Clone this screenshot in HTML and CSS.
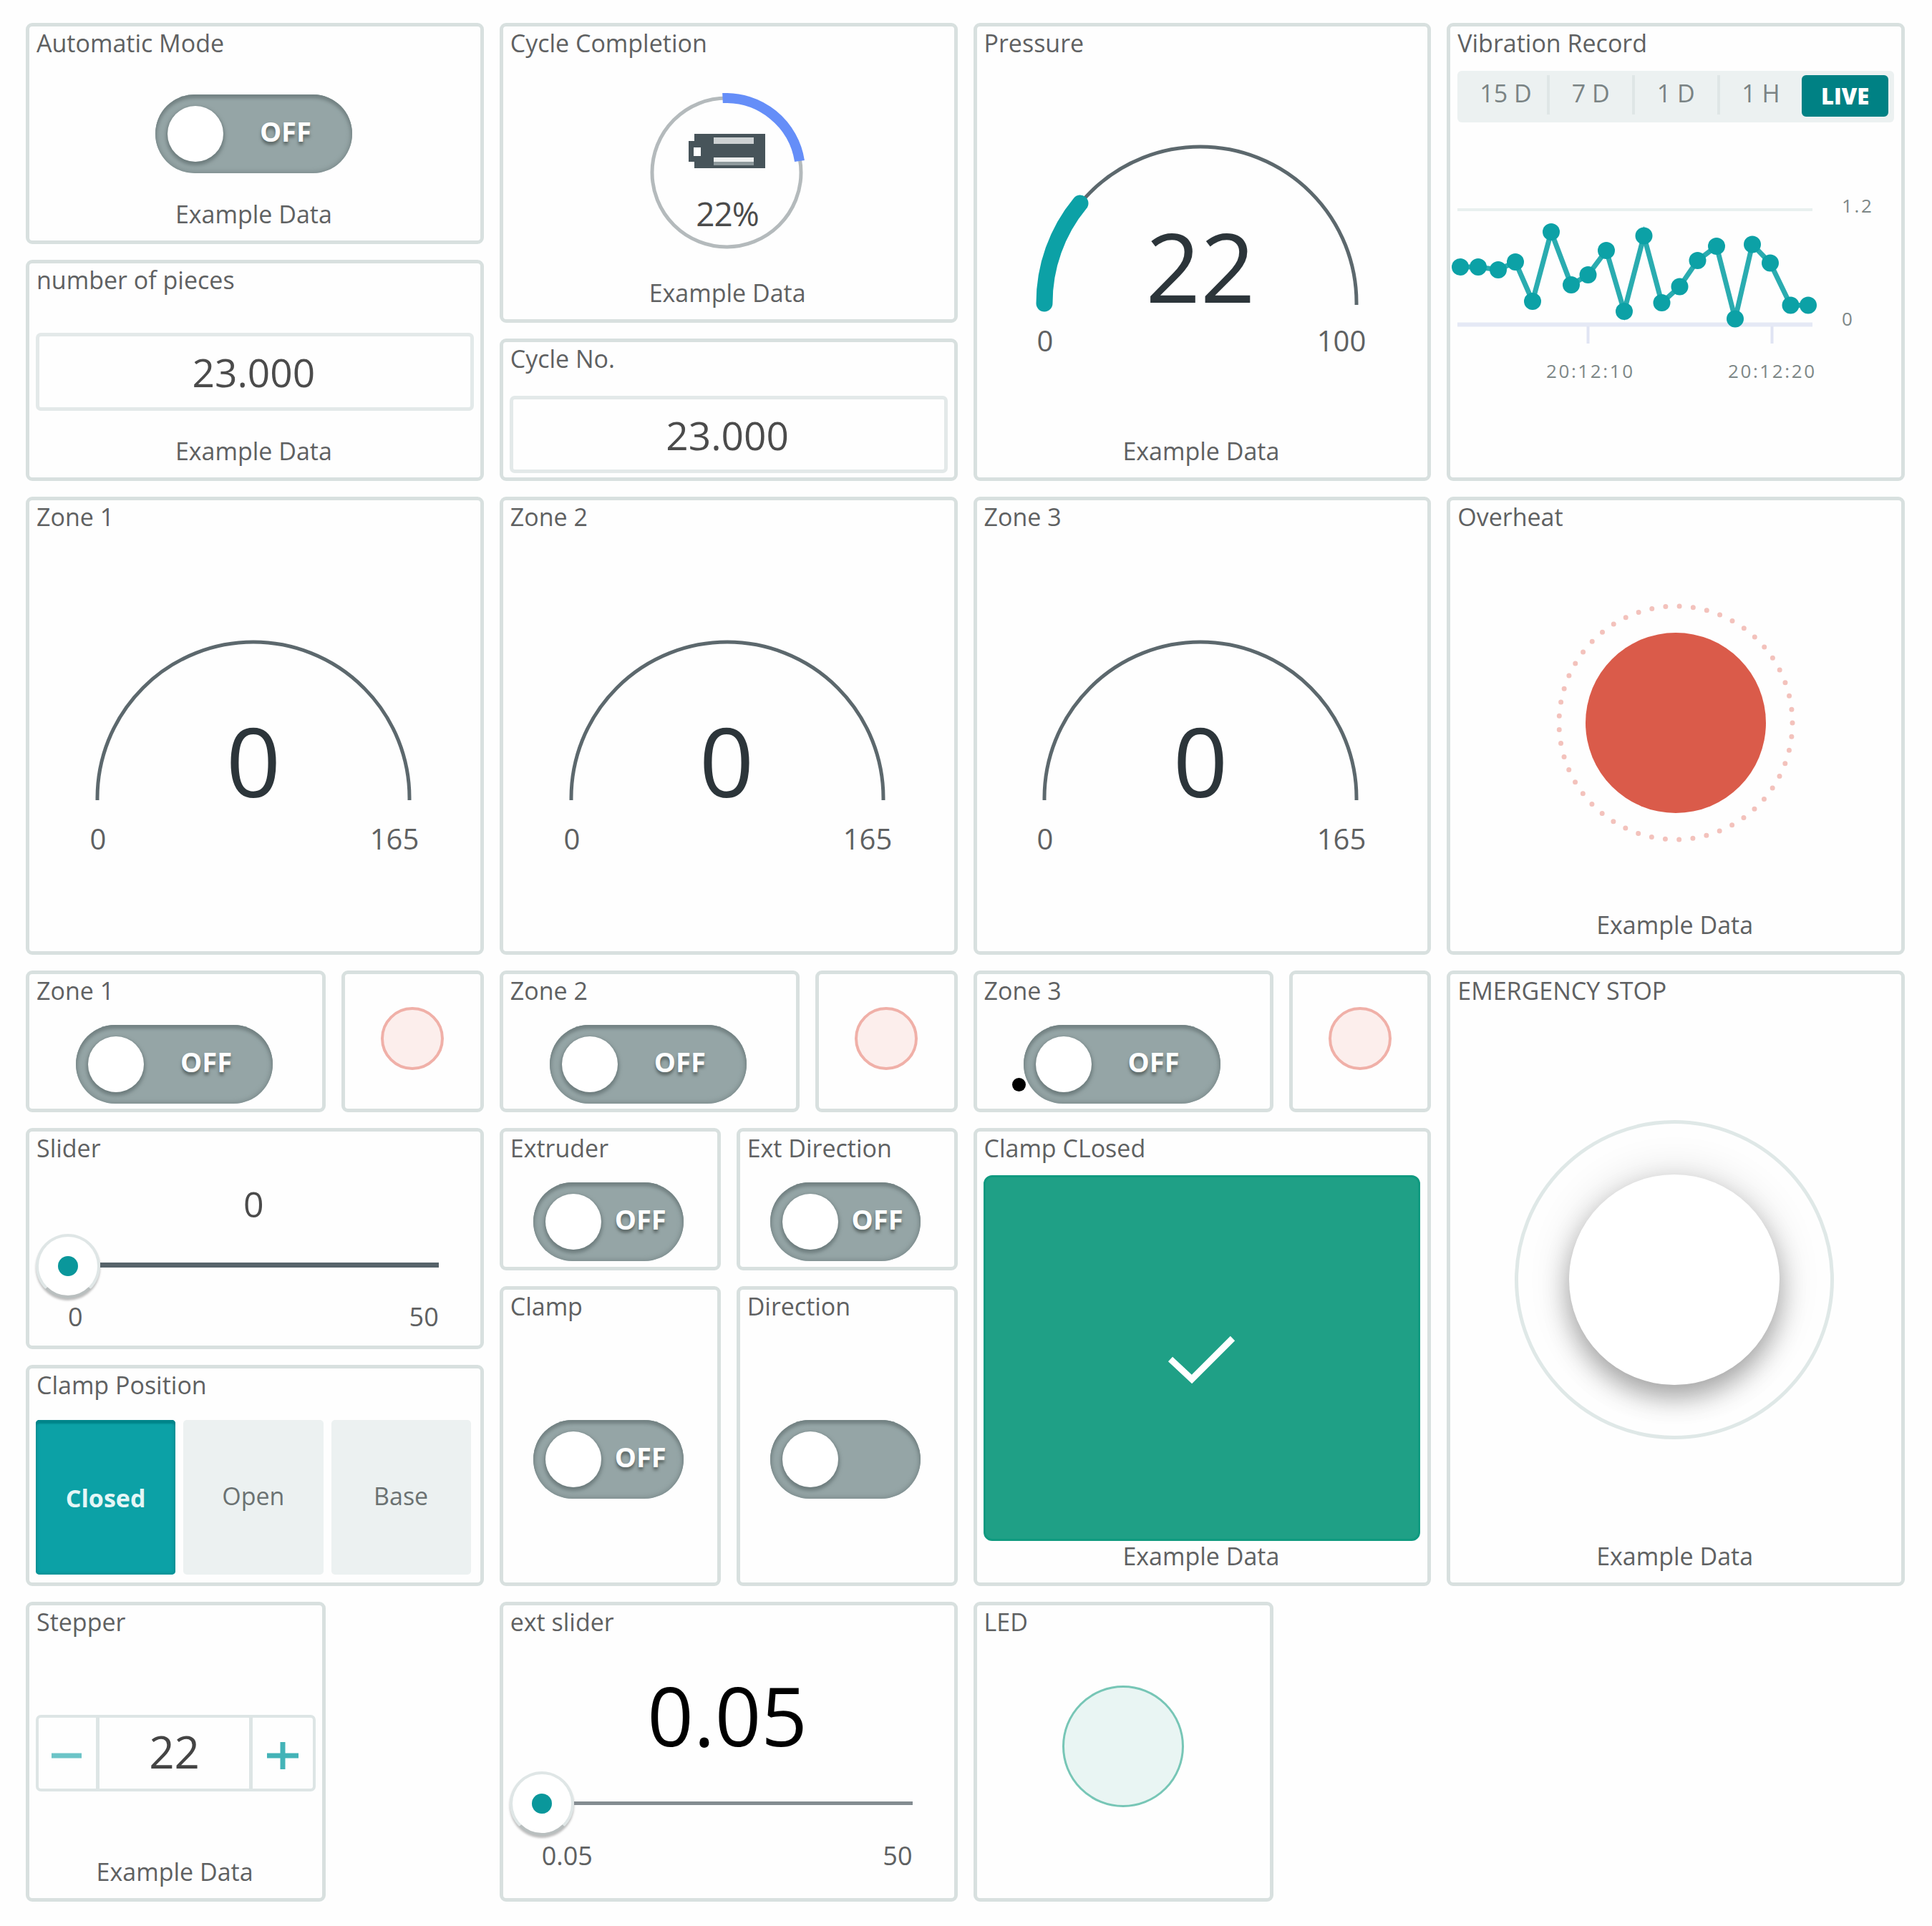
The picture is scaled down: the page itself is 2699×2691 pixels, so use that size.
FILE: index.html
```html
<!DOCTYPE html>
<html lang="en">
  <head>
    <meta charset="UTF-8" />
    <meta name="viewport" content="width=device-width, initial-scale=1.0" />
    <title>Machine Dashboard</title>
    <link rel="stylesheet" href="styles.css">
  </head>

  <body>
    <div class="dashboard">
      <!-- Row 1 -->
      <div class="card auto-mode">
        <div class="title">Automatic Mode</div>
        <div class="body">
          <div class="toggle"><span class="knob"></span><span class="label">OFF</span></div>
        </div>
        <div class="footer">Example Data</div>
      </div>

      <div class="card pieces">
        <div class="title">number of pieces</div>
        <div class="body">
          <div class="value-box">23.000</div>
        </div>
        <div class="footer">Example Data</div>
      </div>

      <div class="card cycle">
        <div class="title">Cycle Completion</div>
        <div class="body">
          <svg class="percentage" width="240" height="240" viewBox="0 0 240 240">
            <circle cx="120" cy="120" r="104" fill="none" stroke="#b4babc" stroke-width="5" />
            <path d="M114.500 16.100 A104 104 0 0 1 222 104" fill="none" stroke="#658ef8" stroke-width="14" />
            <rect x="75" y="66" width="99" height="48" fill="#47545a" />
            <rect x="67" y="76" width="12" height="29" fill="#47545a" />
            <rect x="74" y="85" width="10" height="12" fill="#fff" />
            <rect x="102" y="71" width="56" height="9" fill="#cdd1d3" />
            <rect x="102" y="99" width="56" height="6" fill="#eceeee" />
            <rect x="102" y="105" width="56" height="5" fill="#8f9a9d" />
            <text x="121" y="195" class="percentage-text">22%</text>
          </svg>
        </div>
        <div class="footer">Example Data</div>
      </div>

      <div class="card cycle-no">
        <div class="title">Cycle No.</div>
        <div class="body">
          <div class="value-box">23.000</div>
        </div>
      </div>

      <div class="card pressure">
        <div class="title">Pressure</div>
        <div class="body">
          <svg class="gauge" width="612" height="430" viewBox="0 0 612 430">
            <path class="gauge-arc" d="M86 343 V340 A218 218 0 0 1 522 340 V343" />
            <path class="gauge-fill" d="M86 341 A218 218 0 0 1 136 201" />
            <text class="gauge-value" x="304" y="340">22</text>
            <text class="gauge-limit" x="87" y="408">0</text>
            <text class="gauge-limit" x="501" y="408">100</text>
          </svg>
        </div>
        <div class="footer">Example Data</div>
      </div>

      <div class="card vibration">
        <div class="title">Vibration Record</div>
        <div class="body">
          <div class="ranges">
            <span>15 D</span>
            <span>7 D</span>
            <span>1 D</span>
            <span>1 H</span>
            <span class="active">LIVE</span>
          </div>
          <svg class="chart" width="612" height="400" viewBox="0 0 612 400">
            <path d="M1 122 H497" stroke="#e8f0ef" stroke-width="4" />
            <path d="M1 282.500 H497" stroke="#e5e9f5" stroke-width="6" />
            <path d="M183.500 285 V309 M440.500 285 V309" stroke="#e0e4f3" stroke-width="4" />
            <polyline class="chart-line" points="5,202 30,202 58,206 82,195 106,250 132,153 160,227 183.500,213 209,179 234,264 261.500,158.500 286.500,252 311.500,229.500 336.500,193 363,173 389,274.500 413,170.500 438,196.500 466.500,255.500 491,255.500" />
            <g class="chart-dots">
              <circle cx="5" cy="202" r="12" />
              <circle cx="30" cy="202" r="12" />
              <circle cx="58" cy="206" r="12" />
              <circle cx="82" cy="195" r="12" />
              <circle cx="106" cy="250" r="12" />
              <circle cx="132" cy="153" r="12" />
              <circle cx="160" cy="227" r="12" />
              <circle cx="183.500" cy="213" r="12" />
              <circle cx="209" cy="179" r="12" />
              <circle cx="234" cy="264" r="12" />
              <circle cx="261.500" cy="158.500" r="12" />
              <circle cx="286.500" cy="252" r="12" />
              <circle cx="311.500" cy="229.500" r="12" />
              <circle cx="336.500" cy="193" r="12" />
              <circle cx="363" cy="173" r="12" />
              <circle cx="389" cy="274.500" r="12" />
              <circle cx="413" cy="170.500" r="12" />
              <circle cx="438" cy="196.500" r="12" />
              <circle cx="466.500" cy="255.500" r="12" />
              <circle cx="491" cy="255.500" r="12" />
            </g>
            <g class="chart-text">
              <text x="538" y="126">1.2</text>
              <text x="538" y="284">0</text>
              <text x="125" y="357">20:12:10</text>
              <text x="379" y="357">20:12:20</text>
            </g>
          </svg>
        </div>
      </div>

      <!-- Row 2 -->
      <div class="card zone-gauge">
        <div class="title">Zone 1</div>
        <div class="body">
          <svg class="gauge" width="612" height="430" viewBox="0 0 612 430">
            <path class="gauge-arc" d="M86 343 V340 A218 218 0 0 1 522 340 V343" />
            <text class="gauge-value" x="304" y="339">0</text>
            <text class="gauge-limit" x="87" y="412">0</text>
            <text class="gauge-limit" x="501" y="412">165</text>
          </svg>
        </div>
      </div>

      <div class="card zone-gauge">
        <div class="title">Zone 2</div>
        <div class="body">
          <svg class="gauge" width="612" height="430" viewBox="0 0 612 430">
            <path class="gauge-arc" d="M86 343 V340 A218 218 0 0 1 522 340 V343" />
            <text class="gauge-value" x="303" y="339">0</text>
            <text class="gauge-limit" x="87" y="412">0</text>
            <text class="gauge-limit" x="500" y="412">165</text>
          </svg>
        </div>
      </div>

      <div class="card zone-gauge">
        <div class="title">Zone 3</div>
        <div class="body">
          <svg class="gauge" width="612" height="430" viewBox="0 0 612 430">
            <path class="gauge-arc" d="M86 343 V340 A218 218 0 0 1 522 340 V343" />
            <text class="gauge-value" x="304" y="339">0</text>
            <text class="gauge-limit" x="87" y="412">0</text>
            <text class="gauge-limit" x="501" y="412">165</text>
          </svg>
        </div>
      </div>

      <div class="card overheat">
        <div class="title">Overheat</div>
        <div class="body">
          <svg class="alarm" width="340" height="340" viewBox="0 0 340 340">
            <circle cx="170" cy="170" r="126" fill="#da5b4a" />
            <circle cx="170" cy="170" r="163" fill="none" stroke="#f3c2bc" stroke-width="7" stroke-linecap="round" stroke-dasharray="0 19.324" />
          </svg>
        </div>
        <div class="footer">Example Data</div>
      </div>

      <!-- Row 3 -->
      <div class="card zone-switch">
        <div class="title">Zone 1</div>
        <div class="body">
          <div class="toggle"><span class="knob"></span><span class="label">OFF</span></div>
        </div>
      </div>
      <div class="card zone-led"><span class="led red"></span></div>

      <div class="card zone-switch">
        <div class="title">Zone 2</div>
        <div class="body">
          <div class="toggle"><span class="knob"></span><span class="label">OFF</span></div>
        </div>
      </div>
      <div class="card zone-led"><span class="led red"></span></div>

      <div class="card zone-switch">
        <div class="title">Zone 3</div>
        <div class="body">
          <div class="toggle"><span class="knob"></span><span class="label">OFF</span></div>
        </div>
        <span class="dot"></span>
      </div>
      <div class="card zone-led"><span class="led red"></span></div>

      <div class="card emergency">
        <div class="title">EMERGENCY STOP</div>
        <div class="body">
          <div class="push-ring"><div class="push-button"></div></div>
        </div>
        <div class="footer">Example Data</div>
      </div>

      <!-- Row 4 -->
      <div class="card slider">
        <div class="title">Slider</div>
        <div class="body">
          <div class="slider-value">0</div>
          <div class="track"><span class="handle"></span><span class="line"></span></div>
          <div class="limits"><span>0</span><span>50</span></div>
        </div>
      </div>

      <div class="card clamp-position">
        <div class="title">Clamp Position</div>
        <div class="body">
          <div class="options">
            <div class="option selected">Closed</div>
            <div class="option">Open</div>
            <div class="option">Base</div>
          </div>
        </div>
      </div>

      <div class="card extruder">
        <div class="title">Extruder</div>
        <div class="body">
          <div class="toggle small"><span class="knob"></span><span class="label">OFF</span></div>
        </div>
      </div>

      <div class="card ext-direction">
        <div class="title">Ext Direction</div>
        <div class="body">
          <div class="toggle small"><span class="knob"></span><span class="label">OFF</span></div>
        </div>
      </div>

      <div class="card clamp">
        <div class="title">Clamp</div>
        <div class="body">
          <div class="toggle small"><span class="knob"></span><span class="label">OFF</span></div>
        </div>
      </div>

      <div class="card direction">
        <div class="title">Direction</div>
        <div class="body">
          <div class="toggle small"><span class="knob"></span></div>
        </div>
      </div>

      <div class="card clamp-closed">
        <div class="title">Clamp CLosed</div>
        <div class="body">
          <div class="status">
            <svg width="104" height="72" viewBox="0 0 104 72">
              <path d="M8 37 L38 65 L95 8" fill="none" stroke="#fff" stroke-width="9" />
            </svg>
          </div>
        </div>
        <div class="footer">Example Data</div>
      </div>

      <!-- Row 5 -->
      <div class="card stepper">
        <div class="title">Stepper</div>
        <div class="body">
          <div class="step-box">
            <div class="step minus">
              <svg width="46" height="46" viewBox="0 0 46 46">
                <path d="M2 23 H44" stroke="#6cc4c7" stroke-width="7" />
              </svg>
            </div>
            <div class="step-value">22</div>
            <div class="step plus">
              <svg width="46" height="46" viewBox="0 0 46 46">
                <path d="M1 23 H45 M23 4 V42" stroke="#43b3b7" stroke-width="7" />
              </svg>
            </div>
          </div>
        </div>
        <div class="footer">Example Data</div>
      </div>

      <div class="card ext-slider">
        <div class="title">ext slider</div>
        <div class="body">
          <div class="slider-value">0.05</div>
          <div class="track"><span class="handle"></span><span class="line"></span></div>
          <div class="limits"><span>0.05</span><span>50</span></div>
        </div>
      </div>

      <div class="card led-card">
        <div class="title">LED</div>
        <div class="body">
          <span class="led green"></span>
        </div>
      </div>
    </div>
  </body>
</html>
```
FILE: styles.css
```css
* {
  box-sizing: border-box;
}

body {
  margin: 0;
  padding: 32px 0 0 36px;
  font-family: "Open Sans", "Noto Sans", sans-serif;
  font-size: 34px;
  color: #5f6162;
  background-color: #fefefe;
}

.dashboard {
  display: grid;
  grid-template-columns: repeat(24, 1fr);
  grid-template-rows: repeat(24, 1fr);
  gap: 22px;
  width: 2625px;
  height: 2625px;
}

.card {
  display: flex;
  flex-direction: column;
  position: relative;
  min-width: 0;
  min-height: 0;
  padding: 0 9px 14px;
  border: 5px solid #d8e0df;
  border-radius: 9px;
  background-color: #fefefe;
}

.title,
.footer {
  flex: none;
  height: 46px;
  line-height: 46px;
  white-space: nowrap;
}

.title {
  padding-left: 1px;
}

.footer {
  padding-right: 3px;
  text-align: center;
}

.body {
  display: flex;
  flex-direction: column;
  align-items: center;
  flex: 1;
  min-height: 0;
}

/* card positions on the 24 x 24 grid */
.auto-mode { grid-area: 1 / 1 / span 3 / span 6; }
.pieces { grid-area: 4 / 1 / span 3 / span 6; }
.cycle { grid-area: 1 / 7 / span 4 / span 6; }
.cycle-no { grid-area: 5 / 7 / span 2 / span 6; }
.pressure { grid-area: 1 / 13 / span 6 / span 6; }
.vibration { grid-area: 1 / 19 / span 6 / span 6; }
.zone-gauge { grid-row: 7 / span 6; grid-column: span 6; }
.overheat { grid-area: 7 / 19 / span 6 / span 6; }
.zone-switch { grid-row: 13 / span 2; grid-column: span 4; }
.zone-led { grid-row: 13 / span 2; grid-column: span 2; }
.emergency { grid-area: 13 / 19 / span 8 / span 6; }
.slider { grid-area: 15 / 1 / span 3 / span 6; }
.clamp-position { grid-area: 18 / 1 / span 3 / span 6; }
.extruder { grid-area: 15 / 7 / span 2 / span 3; }
.ext-direction { grid-area: 15 / 10 / span 2 / span 3; }
.clamp { grid-area: 17 / 7 / span 4 / span 3; }
.direction { grid-area: 17 / 10 / span 4 / span 3; }
.clamp-closed { grid-area: 15 / 13 / span 6 / span 6; }
.stepper { grid-area: 21 / 1 / span 4 / span 4; }
.ext-slider { grid-area: 21 / 7 / span 4 / span 6; }
.led-card { grid-area: 21 / 13 / span 4 / span 4; }

/* toggle */
.toggle {
  display: flex;
  align-items: center;
  flex: none;
  width: 275px;
  height: 110px;
  margin-top: 25px;
  margin-right: 4px;
  padding-left: 17px;
  border-radius: 56px;
  background-color: #95a5a6;
  box-shadow: inset 0 5px 4px #748384, inset 0 0 6px 2px #7d8c8d;
}

.toggle.small {
  width: 210px;
}

.auto-mode .toggle {
  margin-top: 49px;
  margin-right: 3px;
}

.clamp .toggle,
.direction .toggle {
  margin-top: 136px;
}

.knob {
  flex: none;
  width: 78px;
  height: 78px;
  border-radius: 50%;
  background-color: #fff;
  box-shadow: 0 3px 5px 2px #6e7d7e;
}

.label {
  flex: 1;
  padding-right: 6px;
  padding-bottom: 8px;
  font-size: 38px;
  font-weight: bold;
  text-align: center;
  color: #fff;
  text-shadow: 0 4px 4px #56615f;
}

.dot {
  position: absolute;
  left: 49px;
  top: 145px;
  width: 19px;
  height: 19px;
  border-radius: 50%;
  background-color: #000;
}

/* value */
.value-box {
  flex: none;
  width: 100%;
  height: 109px;
  margin-top: 51px;
  padding-right: 3px;
  border: 5px solid #e3e9e9;
  border-radius: 7px;
  font-size: 55px;
  line-height: 99px;
  text-align: center;
  color: #4b4b4b;
}

.cycle-no .value-box {
  height: 108px;
  margin-top: 29px;
}

/* percentage */
.percentage {
  flex: none;
  margin-top: 38px;
  margin-right: 5px;
}

.percentage-text {
  font-size: 46px;
  letter-spacing: -1px;
  text-anchor: middle;
  fill: #4b4b4b;
}

/* gauges */
.gauge {
  flex: none;
}

.zone-gauge .gauge {
  margin-top: 30px;
}

.gauge-arc {
  fill: none;
  stroke: #5c686d;
  stroke-width: 5;
}

.gauge-fill {
  fill: none;
  stroke: #0ca1a6;
  stroke-width: 23;
  stroke-linecap: round;
}

.gauge-value {
  font-size: 134px;
  text-anchor: middle;
  fill: #2c353a;
}

.gauge-limit {
  font-size: 40px;
  text-anchor: middle;
  fill: #5f6162;
}

/* chart */
.ranges {
  display: flex;
  flex: none;
  width: 610px;
  height: 72px;
  margin-top: 16px;
  padding: 6px 8px 6px 10px;
  border-radius: 6px;
  background-color: #ecf1f1;
}

.ranges span {
  flex: 1;
  height: 55px;
  border-right: 4px solid #dfe6e6;
  line-height: 51px;
  text-align: center;
  color: #7a8384;
}

.ranges span:nth-child(4) {
  border-right: none;
}

.ranges .active {
  height: 58px;
  border: 3px solid #008184;
  border-radius: 6px;
  font-weight: 800;
  font-size: 31px;
  line-height: 53px;
  color: #fff;
  background-color: #008184;
}

.chart {
  flex: none;
  overflow: visible;
}

.chart-line {
  fill: none;
  stroke: #2aacb0;
  stroke-width: 7;
}

.chart-dots {
  fill: #0ca1a6;
}

.chart-text {
  font-size: 26px;
  letter-spacing: 2.6px;
  fill: #7d8787;
}

/* status */
.alarm {
  flex: none;
  margin-top: 95px;
}

.status {
  display: flex;
  justify-content: center;
  align-items: center;
  flex: none;
  width: 610px;
  height: 511px;
  margin-top: 15px;
  border: 3px solid #109a80;
  border-radius: 12px;
  background-color: #1fa086;
}

.clamp-closed .body {
  flex: none;
  height: 524px;
}

/* led */
.led {
  flex: none;
  border-radius: 50%;
}

.zone-led {
  align-items: center;
}

.led.red {
  width: 88px;
  height: 88px;
  margin-top: 46px;
  border: 4px solid #f0b0a8;
  background-color: #fceeec;
}

.led.green {
  width: 170px;
  height: 170px;
  margin-top: 66px;
  border: 3px solid #77c6b6;
  background-color: #e9f5f3;
}

/* push button */
.push-ring {
  display: flex;
  justify-content: center;
  align-items: center;
  flex: none;
  width: 446px;
  height: 446px;
  margin-top: 158px;
  margin-right: 4px;
  border: 5px solid #dfe8e7;
  border-radius: 50%;
}

.push-button {
  width: 294px;
  height: 294px;
  border-radius: 50%;
  background-color: #fff;
  box-shadow: 0 18px 36px rgba(0, 0, 0, 0.3), 0 0 60px rgba(0, 0, 0, 0.14);
}

/* sliders */
.slider-value {
  flex: none;
  margin-top: 30px;
  padding-right: 3px;
  font-size: 50px;
  line-height: 50px;
  color: #4b4b4b;
}

.track {
  display: flex;
  align-items: center;
  flex: none;
  width: 100%;
  height: 92px;
  margin-top: 16px;
  padding-right: 49px;
}

.handle {
  display: flex;
  justify-content: center;
  align-items: center;
  flex: none;
  width: 90px;
  height: 90px;
  border: 4px solid #dfe6e6;
  border-bottom-color: #b9bfbf;
  border-radius: 50%;
  background-color: #fff;
  box-shadow: 0 3px 3px rgba(0, 0, 0, 0.25);
}

.handle::after {
  content: "";
  width: 28px;
  height: 28px;
  border-radius: 50%;
  background-color: #0a979b;
}

.line {
  flex: 1;
  height: 7px;
  margin-bottom: 3px;
  background-color: #56636a;
}

.limits {
  display: flex;
  justify-content: space-between;
  width: 100%;
  margin-top: 5px;
  padding: 0 49px 0 45px;
  font-size: 36px;
  line-height: 40px;
}

.ext-slider .slider-value {
  margin-top: 51px;
  font-size: 113px;
  line-height: 113px;
  color: #000;
}

.ext-slider .track {
  margin-top: 21px;
}

.ext-slider .line {
  height: 5px;
  margin-bottom: 0;
  background-color: #848c91;
}

.ext-slider .limits {
  margin-top: 7px;
}

/* clamp position */
.options {
  display: flex;
  gap: 11px;
  flex: none;
  width: 100%;
  height: 216px;
  margin-top: 26px;
  padding-right: 4px;
}

.option {
  display: flex;
  justify-content: center;
  align-items: center;
  flex: 1 1 0;
  width: 0;
  padding: 0 0 4px;
  border-radius: 5px;
  color: #6b7272;
  background-color: #ecf1f1;
}

.option.selected {
  padding: 3px 0 0;
  font-weight: bold;
  color: #e4f6f6;
  background-color: #0ca1a6;
  box-shadow: inset 0 5px 2px #00848a, inset 0 0 4px 2px #068f94;
}

/* stepper */
.step-box {
  display: flex;
  flex: none;
  width: 100%;
  height: 107px;
  margin-top: 107px;
  border: 4px solid #dde5e5;
  border-radius: 7px;
}

.step {
  display: flex;
  justify-content: center;
  align-items: center;
  width: 82px;
  padding-top: 7px;
}

.step.minus {
  width: 80px;
  padding-right: 2px;
}

.step.plus {
  width: 84px;
}

.step-value {
  flex: 1;
  border: solid #dde5e5;
  border-width: 0 5px;
  font-size: 62px;
  line-height: 95px;
  text-align: center;
  color: #444;
}
```
